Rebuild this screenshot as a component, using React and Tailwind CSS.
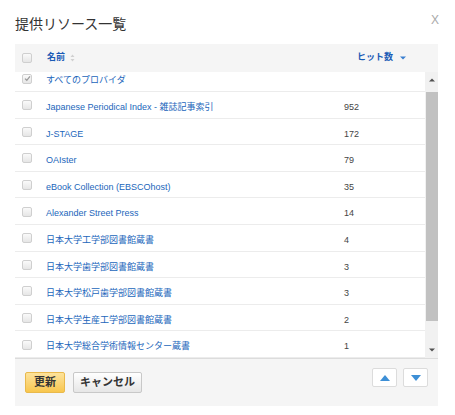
import { useState } from 'react';

const rows = [
  { name: 'すべてのプロバイダ', hits: '', checked: true },
  { name: 'Japanese Periodical Index - 雑誌記事索引', hits: '952' },
  { name: 'J-STAGE', hits: '172' },
  { name: 'OAIster', hits: '79' },
  { name: 'eBook Collection (EBSCOhost)', hits: '35' },
  { name: 'Alexander Street Press', hits: '14' },
  { name: '日本大学工学部図書館蔵書', hits: '4' },
  { name: '日本大学歯学部図書館蔵書', hits: '3' },
  { name: '日本大学松戸歯学部図書館蔵書', hits: '3' },
  { name: '日本大学生産工学部図書館蔵書', hits: '2' },
  { name: '日本大学総合学術情報センター蔵書', hits: '1' },
];

function Checkbox({ checked, disabled }) {
  return (
    <span className="flex h-[10px] w-[10px] items-center justify-center rounded-[2px] border border-[#cfcfcf] bg-gradient-to-b from-[#fafafa] to-[#e6e6e6]">
      {checked && (
        <svg width="7" height="7" viewBox="0 0 7 7">
          <path d="M1 3.6 L2.8 5.3 L6 1.4" fill="none" stroke={disabled ? '#9a9a9a' : '#555'} strokeWidth="1.3" />
        </svg>
      )}
    </span>
  );
}

export default function App() {
  const [items] = useState(rows);

  return (
    <div className="relative h-[415px] w-[455px] bg-white font-['Liberation_Sans','Noto_Sans_CJK_JP',sans-serif] text-[#333]">
      <div className="flex h-[44px] items-start justify-between px-[15px]">
        <h2 className="pt-[15px] text-[14px] leading-[18px] text-[#333]">提供リソース一覧</h2>
        <button className="mr-[1px] pt-[13px] text-[12px] leading-[14px] text-[#aaa]">X</button>
      </div>

      <div className="mx-[15px] w-[423px]">
        <div className="flex h-[28px] items-center bg-[#f5f5f5] text-[9px] font-bold text-[#1a5bb5]">
          <span className="w-[32px] pl-[7px]">
            <Checkbox />
          </span>
          <span className="flex w-[310px] items-center gap-[5px]">
            名前
            <svg width="5" height="8" viewBox="0 0 5 8">
              <path d="M2.5 0.5 L4.5 3 L0.5 3 Z M0.5 5 L4.5 5 L2.5 7.5 Z" fill="#d0d0d0" />
            </svg>
          </span>
          <span className="flex items-center gap-[7px]">
            ヒット数
            <svg width="6" height="4" viewBox="0 0 6 4">
              <path d="M0 0.5 L6 0.5 L3 3.5 Z" fill="#3a7fd0" />
            </svg>
          </span>
        </div>

        <div className="flex h-[286px]">
          <div className="flex-1 overflow-hidden">
            <div className="-mt-[6.6px]">
              {items.map((r) => (
                <div key={r.name} className="flex h-[26.6px] items-center border-b border-[#ececec] pt-[6px] text-[9px]">
                  <span className="-mt-[5px] w-[31px] pl-[7px]">
                    <Checkbox checked={r.checked} disabled={r.checked} />
                  </span>
                  <span className="w-[298px] text-[#2266bb]">{r.name}</span>
                  <span className="text-[#444]">{r.hits}</span>
                </div>
              ))}
            </div>
          </div>
          <div className="flex w-[13px] flex-col bg-[#f1f1f1] pl-[1px]">
            <div className="flex h-[16px] items-center justify-center">
              <svg width="6" height="4" viewBox="0 0 6 4">
                <path d="M3 0.5 L6 3.5 L0 3.5 Z" fill="#505050" />
              </svg>
            </div>
            <div className="mt-[4px] h-[229px] bg-[#c1c1c1]" />
            <div className="flex-1" />
            <div className="flex h-[16px] items-center justify-center">
              <svg width="6" height="4" viewBox="0 0 6 4">
                <path d="M0 0.5 L6 0.5 L3 3.5 Z" fill="#505050" />
              </svg>
            </div>
          </div>
        </div>

        <div className="flex h-[48px] justify-between border-t border-[#dcdcdc] bg-[#f5f5f5] px-[10px]">
          <div className="flex gap-[8px] pt-[13px]">
            <button className="h-[21px] w-[40px] rounded-[2px] border border-[#e9b94c] bg-gradient-to-b from-[#fde39a] to-[#f8c64c] text-[11px] font-bold text-[#333]">
              更新
            </button>
            <button className="h-[21px] w-[69px] rounded-[2px] border border-[#c8c8c8] bg-gradient-to-b from-[#ffffff] to-[#e6e6e6] text-[11px] font-bold text-[#333]">
              キャンセル
            </button>
          </div>
          <div className="flex gap-[6px] pt-[9px]">
            <button className="flex h-[19px] w-[25px] items-center justify-center rounded-[2px] border border-[#dcdcdc] bg-white">
              <svg width="10" height="6" viewBox="0 0 10 6">
                <path d="M5 0 L10 6 L0 6 Z" fill="#3d8fd6" />
              </svg>
            </button>
            <button className="flex h-[19px] w-[25px] items-center justify-center rounded-[2px] border border-[#dcdcdc] bg-white">
              <svg width="10" height="6" viewBox="0 0 10 6">
                <path d="M0 0 L10 0 L5 6 Z" fill="#3d8fd6" />
              </svg>
            </button>
          </div>
        </div>
      </div>
    </div>
  );
}
